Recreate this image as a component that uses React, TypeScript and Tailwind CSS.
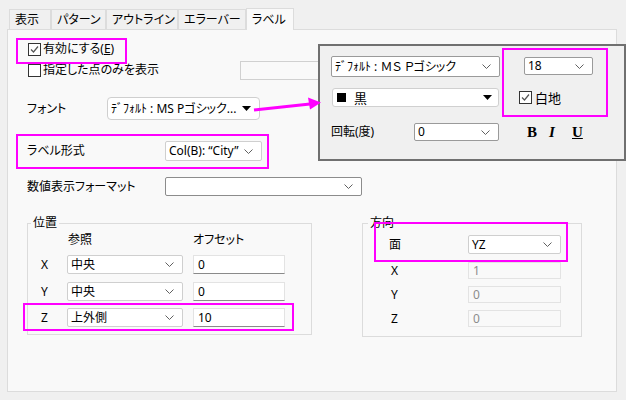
import React from "react";

const font = { fontFamily: '"Noto Sans", "Noto Sans CJK JP", sans-serif' };
const serif = { fontFamily: '"Liberation Serif", serif' };

function Chevron() {
  return (
    <svg width="9" height="5" viewBox="0 0 9 5" className="shrink-0">
      <path d="M0.5 0.5 L4.5 4.5 L8.5 0.5" fill="none" stroke="#606060" strokeWidth="1" />
    </svg>
  );
}

function Triangle() {
  return (
    <svg width="9" height="5" viewBox="0 0 9 5" className="shrink-0">
      <path d="M0 0 H9 L4.5 5 Z" fill="#000" />
    </svg>
  );
}

function Check({ checked }: { checked?: boolean }) {
  return (
    <span className="flex h-[13px] w-[13px] shrink-0 items-center justify-center border border-[#333] bg-white">
      {checked && (
        <svg width="9" height="9" viewBox="0 0 9 9">
          <path d="M1 4.5 L3.5 7 L8 1.5" fill="none" stroke="#555" strokeWidth="1.2" />
        </svg>
      )}
    </span>
  );
}

function Select({ value, className, arrow = "chevron" }: { value: string; className: string; arrow?: "chevron" | "tri" }) {
  return (
    <div className={`flex shrink-0 items-center justify-between bg-white pl-[3px] pr-[8px] text-[12px] leading-[16px] ${className}`}>
      <span className="whitespace-nowrap">{value}</span>
      {arrow === "tri" ? <Triangle /> : <Chevron />}
    </div>
  );
}

function TextBox({ value, className, disabled }: { value: string; className: string; disabled?: boolean }) {
  return (
    <div
      className={`flex shrink-0 items-center px-[4px] text-[12px] leading-[16px] ${
        disabled
          ? "border border-[#e3e3e3] bg-[#f9f9f9] text-[#8c8c8c]"
          : "border border-[#e3e3e3] border-b-[#8a8a8a] bg-white"
      } ${className}`}
    >
      {value}
    </div>
  );
}

const tabs = [
  { label: "表示", w: "w-[42px]" },
  { label: "パターン", w: "w-[55px]" },
  { label: "アウトライン", w: "w-[72px]" },
  { label: "エラーバー", w: "w-[68px]" },
];

export default function App() {
  return (
    <div className="relative h-[400px] w-[626px] overflow-hidden bg-[#f0f0f0] text-black [font-feature-settings:'palt']" style={font}>
      {/* tabs */}
      <div className="ml-[9px] mt-[8px] flex h-[21px] items-end">
        {tabs.map((t) => (
          <div key={t.label} className={`flex h-[20px] items-center whitespace-nowrap border border-b-0 border-[#dcdcdc] pl-[5px] text-[12px] ${t.w}`}>
            {t.label}
          </div>
        ))}
        <div className="relative z-10 -mb-px flex h-[22px] w-[48px] items-center whitespace-nowrap border border-b-0 border-[#dcdcdc] bg-[#f9f9f9] pl-[5px] text-[12px]">
          ラベル
        </div>
      </div>

      {/* panel */}
      <div className="ml-[7px] h-[363px] w-[610px] border border-[#dcdcdc] bg-[#f9f9f9]">
        <div className="mt-[12px] flex h-[14px] items-center pl-[20px] text-[12px]">
          <Check checked />
          <span className="ml-[2px]">有効にする(<span className="underline">E</span>)</span>
        </div>

        <div className="mt-[4px] flex h-[20px] items-center pl-[20px] text-[12px]">
          <div className="flex w-[212px] items-center">
            <Check />
            <span className="ml-[2px]">指定した点のみを表示</span>
          </div>
          <div className="h-[19px] w-[200px] border border-[#d0d0d0] bg-[#f9f9f9]" />
        </div>

        <div className="mt-[17px] flex h-[23px] items-center pl-[19px] text-[12px]">
          <span className="w-[80px]">フォント</span>
          <Select value="ﾃﾞﾌｫﾙﾄ : MS Pゴシック..." arrow="tri" className="h-[23px] w-[153px] rounded-[4px] border border-[#cfcfcf] pr-[7px]" />
        </div>

        <div className="mt-[21px] flex h-[20px] items-center pl-[19px] text-[12px]">
          <span className="w-[138px]">ラベル形式</span>
          <Select value="Col(B): “City”" className="h-[20px] w-[97px] rounded-[2px] border border-[#cfcfcf] bg-[#fbfbfb] pr-[6px]" />
        </div>

        <div className="mt-[16px] flex h-[19px] items-center pl-[19px] text-[12px]">
          <span className="w-[138px]">数値表示フォーマット</span>
          <Select value="" className="h-[19px] w-[197px] rounded-[2px] border border-[#8c8c8c]" />
        </div>

        <div className="mt-[19px] flex items-start pl-[19px] text-[12px]">
          <fieldset className="h-[120px] w-[285px] border border-[#dcdcdc]">
            <legend className="ml-[3px] px-[2px] text-[12px] leading-[16px]">位置</legend>
            <div className="mt-[1px] flex h-[16px] items-center pl-[40px]">
              <span className="w-[125px]">参照</span>
              <span>オフセット</span>
            </div>
            {[
              { k: "X", v: "中央", o: "0", mt: "mt-[7px]" },
              { k: "Y", v: "中央", o: "0", mt: "mt-[8px]" },
              { k: "Z", v: "上外側", o: "10", mt: "mt-[7px]" },
            ].map((r) => (
              <div key={r.k} className={`flex h-[19px] items-center pl-[13px] ${r.mt}`}>
                <span className="w-[26px]">{r.k}</span>
                <Select value={r.v} className="h-[19px] w-[116px] rounded-[2px] border border-[#cfcfcf]" />
                <TextBox value={r.o} className="ml-[10px] h-[19px] w-[92px]" />
              </div>
            ))}
          </fieldset>

          <fieldset className="ml-[50px] h-[122px] w-[220px] border border-[#dcdcdc]">
            <legend className="ml-[5px] px-[2px] text-[12px] leading-[16px]">方向</legend>
            <div className="mt-[4px] flex h-[19px] items-center pl-[26px]">
              <span className="w-[79px]">面</span>
              <Select value="YZ" className="h-[19px] w-[93px] rounded-[2px] border border-[#cfcfcf]" />
            </div>
            {[
              { k: "X", v: "1", mt: "mt-[8px]" },
              { k: "Y", v: "0", mt: "mt-[7px]" },
              { k: "Z", v: "0", mt: "mt-[7px]" },
            ].map((r) => (
              <div key={r.k} className={`flex h-[17px] items-center pl-[28px] ${r.mt}`}>
                <span className="w-[77px]">{r.k}</span>
                <TextBox value={r.v} disabled className="h-[17px] w-[93px]" />
              </div>
            ))}
          </fieldset>
        </div>
      </div>

      {/* font popup */}
      <div className="absolute left-[318px] top-[44px] z-20 h-[117px] w-[308px] border-2 border-[#707070] bg-[#f0f0f0] text-[12px]">
        <div className="ml-[11px] mt-[10px] flex items-start">
          <Select value="ﾃﾞﾌｫﾙﾄ : ＭＳ Ｐゴシック" className="h-[21px] w-[169px] rounded-[2px] border border-[#9a9a9a]" />
          <Select value="18" className="ml-[24px] mt-[1px] h-[18px] w-[69px] rounded-[2px] border border-[#9a9a9a]" />
        </div>
        <div className="ml-[12px] mt-[11px] flex h-[19px] items-center">
          <div className="flex h-[19px] w-[167px] items-center justify-between rounded-[3px] border border-[#d0d0d0] bg-white pl-[4px] pr-[6px]">
            <span className="flex items-center">
              <span className="h-[9px] w-[9px] bg-black" />
              <span className="ml-[8px] text-[13px] leading-[16px]">黒</span>
            </span>
            <Triangle />
          </div>
          <span className="ml-[20px] flex items-center">
            <Check checked />
            <span className="ml-[3px] text-[13px] leading-[16px]">白地</span>
          </span>
        </div>
        <div className="ml-[11px] mt-[16px] flex h-[18px] items-center">
          <span className="w-[83px]">回転(度)</span>
          <Select value="0" className="h-[18px] w-[85px] rounded-[2px] border border-[#9a9a9a]" />
          <span className="ml-[28px] w-[22px] text-[15px] font-black" style={serif}>B</span>
          <span className="w-[23px] text-[15px] font-bold italic" style={serif}>I</span>
          <span className="text-[15px] font-bold underline" style={serif}>U</span>
        </div>
      </div>

      {/* annotations */}
      <div className="absolute left-[16px] top-[38px] z-30 h-[26px] w-[111px] border-2 border-[#ff00ff]" />
      <div className="absolute left-[16px] top-[134px] z-30 h-[35px] w-[253px] border-2 border-[#ff00ff]" />
      <div className="absolute left-[23px] top-[303px] z-30 h-[28px] w-[271px] border-2 border-[#ff00ff]" />
      <div className="absolute left-[374px] top-[222px] z-30 h-[40px] w-[194px] border-2 border-[#ff00ff]" />
      <div className="absolute left-[502px] top-[48px] z-30 h-[69px] w-[106px] border-2 border-[#ff00ff]" />
      <svg className="absolute left-[250px] top-[94px] z-30" width="75" height="22" viewBox="0 0 75 22">
        <path d="M4 16 L60 10" stroke="#ff00ff" strokeWidth="3" fill="none" />
        <path d="M58 3.5 L71 8.5 L60 15.5 Z" fill="#ff00ff" />
      </svg>
    </div>
  );
}
